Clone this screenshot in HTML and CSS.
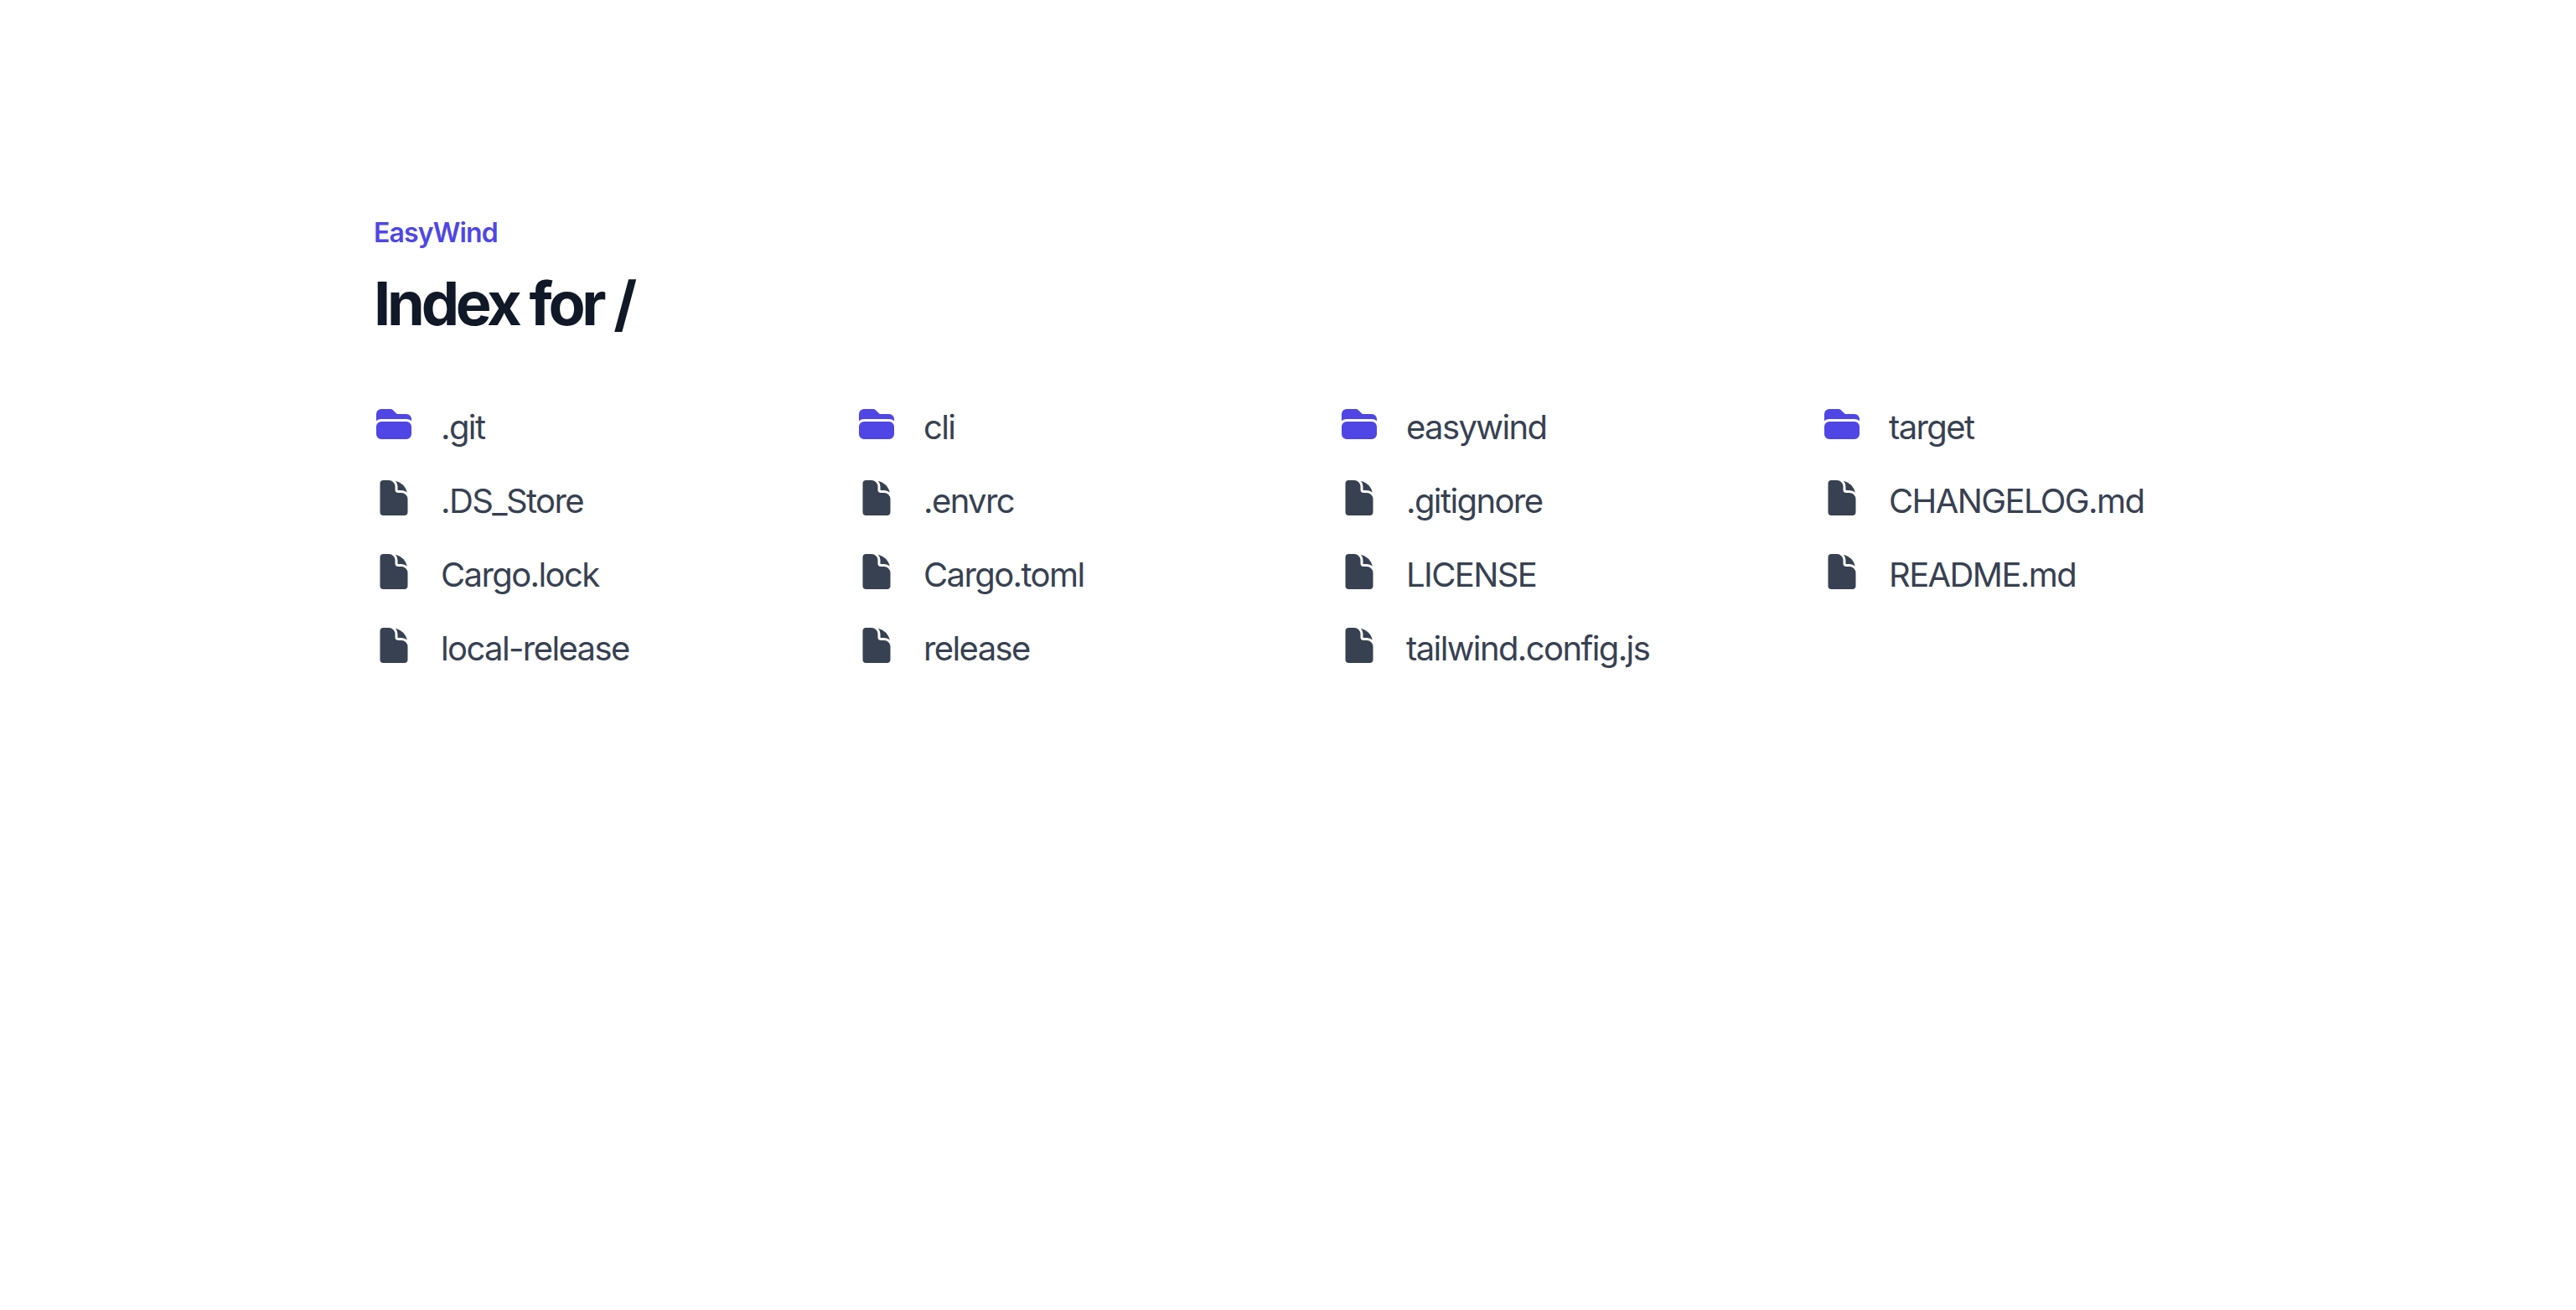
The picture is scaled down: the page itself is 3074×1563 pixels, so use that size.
FILE: index.html
```html
<!DOCTYPE html>
<html lang="en">
<head>
<meta charset="utf-8">
<title>Index for /</title>
<link rel="stylesheet" href="styles.css">
</head>
<body>
<svg class="defs" width="0" height="0" aria-hidden="true">
  <symbol id="folder" viewBox="0 0 24 24"><path d="M19.5 21a3 3 0 003-3v-4.5a3 3 0 00-3-3h-15a3 3 0 00-3 3V18a3 3 0 003 3h15zM1.5 10.146V6a3 3 0 013-3h5.379a2.25 2.25 0 011.59.659l2.122 2.121c.14.141.331.22.53.22H19.5a3 3 0 013 3v1.146A4.483 4.483 0 0019.5 9h-15a4.483 4.483 0 00-3 1.146z"/></symbol>
  <symbol id="file" viewBox="0 0 24 24"><path d="M5.625 1.5c-1.036 0-1.875.84-1.875 1.875v17.25c0 1.035.84 1.875 1.875 1.875h12.75c1.035 0 1.875-.84 1.875-1.875V12.75A3.75 3.75 0 0016.5 9h-1.875a1.875 1.875 0 01-1.875-1.875V5.25A3.75 3.75 0 009 1.5H5.625z"/><path d="M12.971 1.816A5.23 5.23 0 0114.25 5.25v1.875c0 .207.168.375.375.375H16.5a5.23 5.23 0 013.434 1.279 9.768 9.768 0 00-6.963-6.963z"/></symbol>
</svg>
<main class="page">
  <header class="head">
    <p class="brand">EasyWind</p>
    <h1 class="title">Index for /</h1>
  </header>
  <ul class="grid">
    <li class="item dir"><svg class="icon"><use href="#folder"/></svg><span>.git</span></li>
    <li class="item dir"><svg class="icon"><use href="#folder"/></svg><span>cli</span></li>
    <li class="item dir"><svg class="icon"><use href="#folder"/></svg><span>easywind</span></li>
    <li class="item dir"><svg class="icon"><use href="#folder"/></svg><span>target</span></li>
    <li class="item"><svg class="icon"><use href="#file"/></svg><span>.DS_Store</span></li>
    <li class="item"><svg class="icon"><use href="#file"/></svg><span>.envrc</span></li>
    <li class="item"><svg class="icon"><use href="#file"/></svg><span>.gitignore</span></li>
    <li class="item"><svg class="icon"><use href="#file"/></svg><span>CHANGELOG.md</span></li>
    <li class="item"><svg class="icon"><use href="#file"/></svg><span>Cargo.lock</span></li>
    <li class="item"><svg class="icon"><use href="#file"/></svg><span>Cargo.toml</span></li>
    <li class="item"><svg class="icon"><use href="#file"/></svg><span>LICENSE</span></li>
    <li class="item"><svg class="icon"><use href="#file"/></svg><span>README.md</span></li>
    <li class="item"><svg class="icon"><use href="#file"/></svg><span>local-release</span></li>
    <li class="item"><svg class="icon"><use href="#file"/></svg><span>release</span></li>
    <li class="item"><svg class="icon"><use href="#file"/></svg><span>tailwind.config.js</span></li>
  </ul>
</main>
</body>
</html>
```
FILE: styles.css
```css
* { box-sizing: border-box; }
html, body { margin: 0; background: #fff; }
body { font-family: Inter, "Noto Sans", sans-serif; }
.defs { position: absolute; }
.page { width: 2304px; margin: 0 auto; padding: 254px 61px 0; }
.head { margin: 0 0 80px; }
.brand { margin: 0; font-size: 32px; line-height: 48px; font-weight: 600; letter-spacing: -0.85px; color: #4f46e5; }
.title { margin: 20px 0 0; font-size: 72px; line-height: 80px; font-weight: 700; letter-spacing: -4.2px; color: #111827; }
.grid { list-style: none; margin: 0; padding: 0; display: grid; grid-template-columns: repeat(4, 576px); row-gap: 32px; }
.item { display: flex; align-items: flex-start; gap: 32px; height: 56px; font-size: 40px; line-height: 56px; letter-spacing: -1.6px; color: #374151; }
.icon { flex: none; width: 48px; height: 48px; fill: currentColor; }
.dir .icon { fill: #4f46e5; }
```
